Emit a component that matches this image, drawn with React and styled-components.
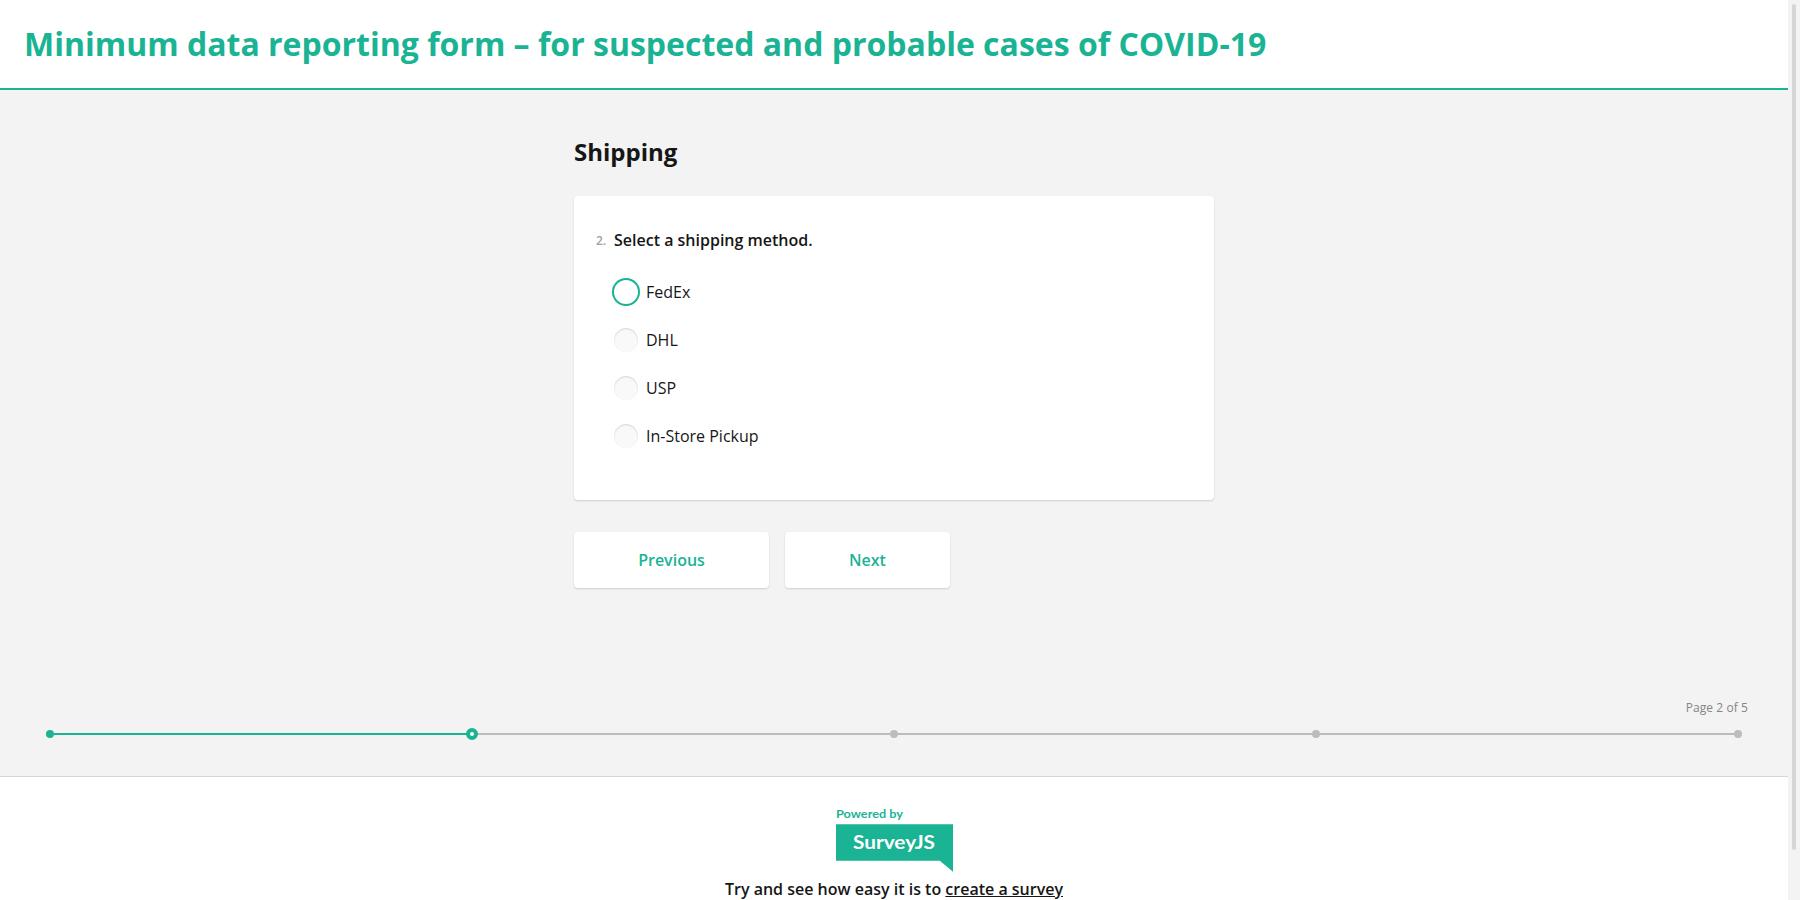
import React from "react";
import styled, { createGlobalStyle, css } from "styled-components";

const primary = "#1ab394";
const line = "#bcbcbc";

const GlobalStyle = createGlobalStyle`
  * { box-sizing: border-box; }
  html, body { margin: 0; height: 100%; overflow: hidden; }
  body { font-family: "Open Sans", "Noto Sans", sans-serif; color: #161616; background: #f3f3f3; }
`;

const Window = styled.div`
  display: flex;
  height: 900px;
  overflow: hidden;
`;

const Page = styled.main`
  flex: 1;
  min-width: 0;
  height: 900px;
  overflow: hidden;
  background: #f3f3f3;
`;

const ScrollTrack = styled.div`
  width: 12px;
  padding: 4px;
  background: #f3f3f3;
`;

const ScrollThumb = styled.div`
  height: 846px;
  border-radius: 2px;
  background: #d6d6d6;
`;

const Header = styled.header`
  height: 90px;
  padding: 24px 24px 0;
  background: #fff;
  border-bottom: 2px solid ${primary};
`;

const SurveyTitle = styled.h1`
  margin: 0;
  font-size: 32px;
  line-height: 40px;
  font-weight: 700;
  color: ${primary};
`;

const Body = styled.section`
  height: 686px;
  display: flex;
  flex-direction: column;
  justify-content: space-between;
`;

const Form = styled.form`
  width: 640px;
  margin: 0 auto;
  padding-top: 46px;
`;

const PageTitle = styled.h2`
  margin: 0 0 28px;
  font-size: 24px;
  line-height: 32px;
  font-weight: 700;
`;

const raised = css`
  background: #fff;
  border-radius: 4px;
  box-shadow: 0 1px 2px rgba(0, 0, 0, 0.15);
`;

const Card = styled.div`
  ${raised}
  height: 304px;
  padding: 32px 20px 0;
`;

const Question = styled.div`
  display: flex;
  align-items: center;
  height: 24px;
  margin-bottom: 16px;
`;

const QuestionNumber = styled.span`
  width: 20px;
  padding: 1px 0 0 2px;
  font-size: 12px;
  line-height: 24px;
  font-weight: 600;
  color: #a0a0a0;
`;

const QuestionTitle = styled.span`
  font-size: 16px;
  font-weight: 600;
`;

const Option = styled.label`
  display: flex;
  align-items: center;
  gap: 8px;
  height: 48px;
  padding-left: 20px;
  font-size: 16px;
  font-weight: 400;
`;

const Radio = styled.span`
  width: 24px;
  height: 24px;
  border-radius: 50%;
  background: ${(p) => (p.$focused ? "#fff" : "#f9f9f9")};
  box-shadow: ${(p) =>
    p.$focused ? `0 0 0 2px ${primary}` : "inset 0 1px 2px rgba(0, 0, 0, 0.15)"};
`;

const Actions = styled.div`
  display: flex;
  gap: 16px;
  margin-top: 32px;
`;

const Button = styled.button`
  ${raised}
  width: ${(p) => p.$width}px;
  height: 56px;
  padding: 0;
  border: 0;
  font: 600 16px "Open Sans", sans-serif;
  color: ${primary};
`;

const Progress = styled.div`
  padding: 0 46px 36px;
`;

const PageCount = styled.div`
  margin: 0 -6px 12px 0;
  text-align: right;
  font-size: 12px;
  line-height: 16px;
  letter-spacing: 0.08px;
  color: #858585;
`;

const Steps = styled.div`
  display: flex;
  align-items: center;
  height: 12px;
`;

const Connector = styled.span`
  flex: 1;
  height: 2px;
  background: ${(p) => (p.$done ? primary : line)};
`;

const Dot = styled.span`
  flex: none;
  width: 8px;
  height: 8px;
  border-radius: 50%;
  background: ${(p) => (p.$state === "todo" ? line : primary)};
  ${(p) =>
    p.$state === "current" &&
    css`
      width: 12px;
      height: 12px;
      margin: 0 -2px;
      background: #fff;
      border: 4px solid ${primary};
      z-index: 1;
    `}
`;

const Footer = styled.footer`
  height: 140px;
  padding-top: 30px;
  background: #fff;
  border-top: 1px solid #d6d6d6;
  display: flex;
  flex-direction: column;
  align-items: center;
`;

const Logo = styled.svg`
  display: block;
  width: 118px;
  height: 66px;
  font-family: Lato, "Open Sans", sans-serif;
  font-weight: 700;
`;

const Invite = styled.p`
  margin: 4px 0 0;
  font-size: 16px;
  line-height: 24px;
  font-weight: 600;
`;

const Link = styled.a`
  color: inherit;
  text-decoration: underline;
`;

const options = ["FedEx", "DHL", "USP", "In-Store Pickup"];
const steps = ["done", "current", "todo", "todo", "todo"];

export default function App() {
  return (
    <>
      <GlobalStyle />
      <Window>
        <Page>
          <Header>
            <SurveyTitle>
              Minimum data reporting form – for suspected and probable cases of COVID-19
            </SurveyTitle>
          </Header>
          <Body>
            <Form>
              <PageTitle>Shipping</PageTitle>
              <Card>
                <Question>
                  <QuestionNumber>2.</QuestionNumber>
                  <QuestionTitle>Select a shipping method.</QuestionTitle>
                </Question>
                {options.map((name, i) => (
                  <Option key={name}>
                    <Radio $focused={i === 0} />
                    {name}
                  </Option>
                ))}
              </Card>
              <Actions>
                <Button type="button" $width={195}>Previous</Button>
                <Button type="button" $width={165}>Next</Button>
              </Actions>
            </Form>
            <Progress>
              <PageCount>Page 2 of 5</PageCount>
              <Steps>
                {steps.map((state, i) => (
                  <React.Fragment key={i}>
                    {i > 0 && <Connector $done={i === 1} />}
                    <Dot $state={state} />
                  </React.Fragment>
                ))}
              </Steps>
            </Progress>
          </Body>
          <Footer>
            <Logo viewBox="0 0 118 66">
              <text x="1" y="11" fontSize="12" textLength="67" lengthAdjust="spacingAndGlyphs" fill={primary}>Powered by</text>
              <path d="M1 17.3H118V64.7L104.8 53.7H1Z" fill={primary} />
              <text x="18" y="42" fontSize="19.5" textLength="82" lengthAdjust="spacingAndGlyphs" fill="#fff">SurveyJS</text>
            </Logo>
            <Invite>
              Try and see how easy it is to <Link>create a survey</Link>
            </Invite>
          </Footer>
        </Page>
        <ScrollTrack>
          <ScrollThumb />
        </ScrollTrack>
      </Window>
    </>
  );
}
